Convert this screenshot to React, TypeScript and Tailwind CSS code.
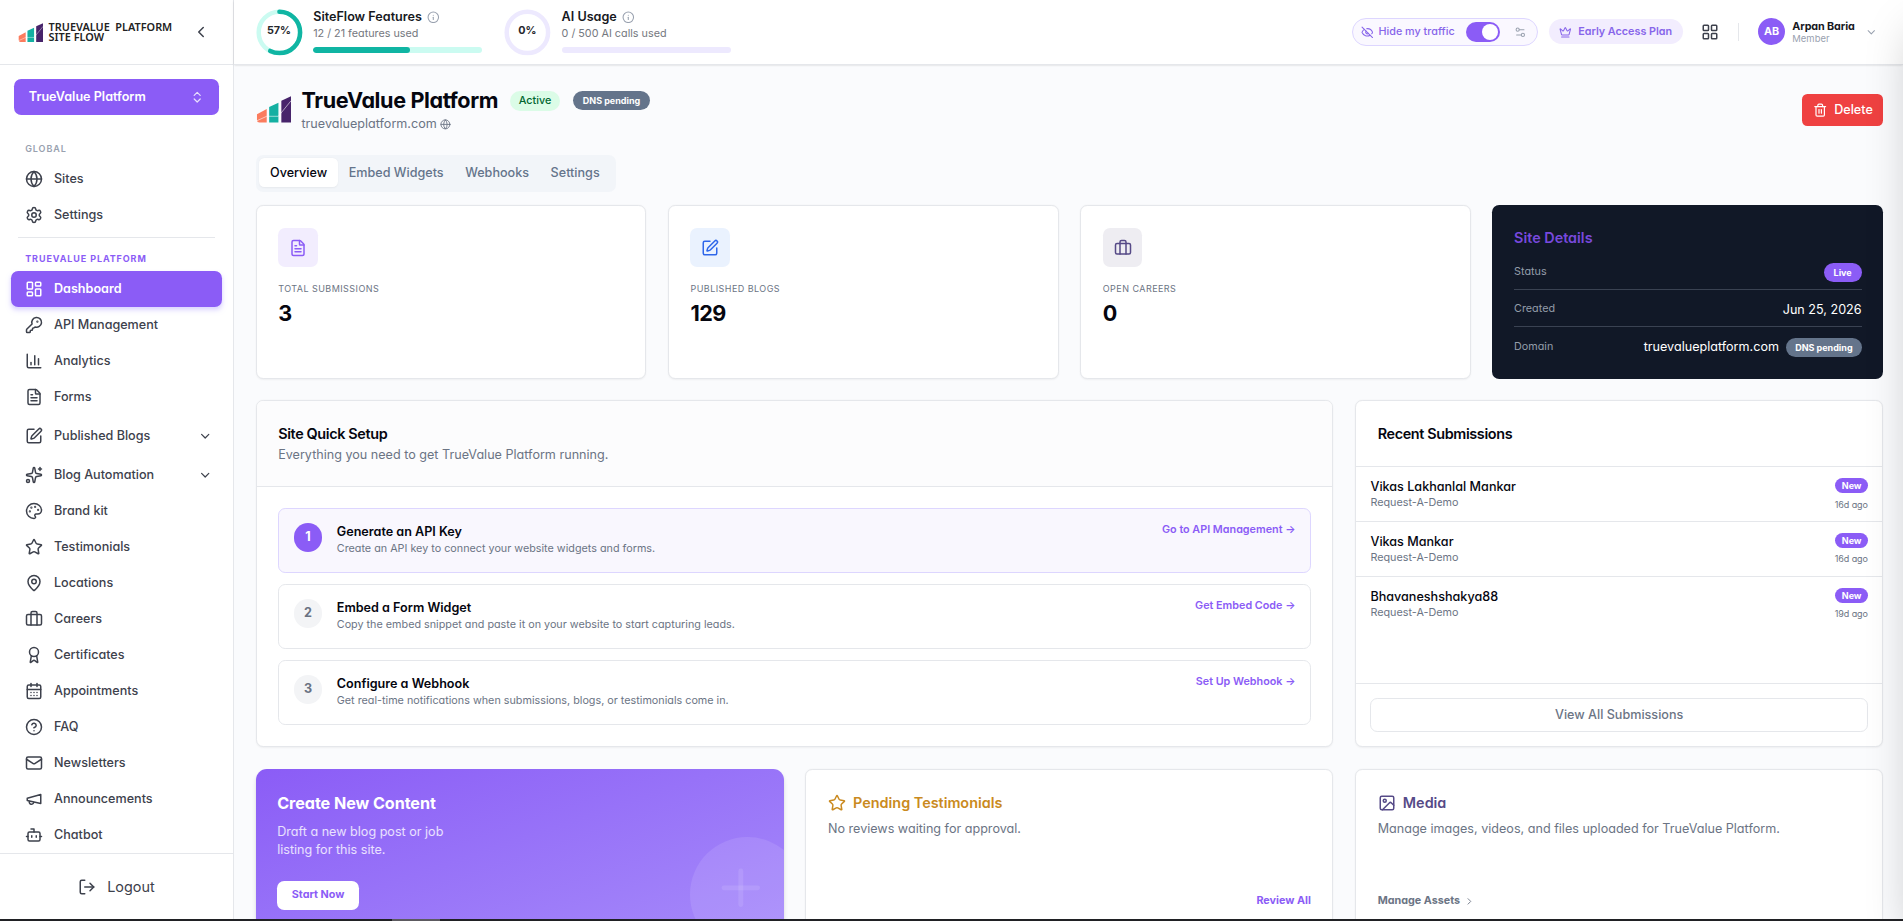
import type { ReactNode } from "react";
import {
  Award,
  Bot,
  Briefcase,
  CalendarDays,
  ChartColumn,
  ChevronDown,
  ChevronLeft,
  ChevronRight,
  ChevronsUpDown,
  CircleQuestionMark,
  Crown,
  EyeOff,
  FileText,
  Globe,
  Image,
  Info,
  KeyRound,
  LayoutDashboard,
  LayoutGrid,
  LogOut,
  MapPin,
  Palette,
  Plus,
  Settings,
  Settings2,
  Sparkles,
  SquarePen,
  Star,
  Trash2,
} from "lucide-react";
import clsx from "clsx";

function MegaphoneIcon({ className }: { className?: string }) {
  return (
    <svg
      viewBox="0 0 24 24"
      fill="none"
      stroke="currentColor"
      strokeWidth={2}
      strokeLinecap="round"
      strokeLinejoin="round"
      className={className}
    >
      <path d="m3 11 18-5v12L3 14v-3z" />
      <path d="M11.6 16.8a3 3 0 1 1-5.8-1.6" />
    </svg>
  );
}

function MailIcon({ className }: { className?: string }) {
  return (
    <svg
      viewBox="0 0 24 24"
      fill="none"
      stroke="currentColor"
      strokeWidth={2}
      strokeLinecap="round"
      strokeLinejoin="round"
      className={className}
    >
      <rect width="20" height="16" x="2" y="4" rx="2" />
      <path d="m22 7-8.970 5.700a1.940 1.940 0 0 1-2.060 0L2 7" />
    </svg>
  );
}

function LogoMark({ className }: { className?: string }) {
  return (
    <svg viewBox="0 0 36 28" className={className}>
      <path d="M1 18.5 11 13v14H3.5A2.5 2.5 0 0 1 1 24.500z" fill="#fb7c5e" />
      <path d="M13.500 11 23 6.500V27h-9.500z" fill="#14b0a2" />
      <path d="M26 4.500 36 0v27h-10z" fill="#47246b" />
      <path d="M0 25.500 11 20.500h12l13-16" fill="none" stroke="#fff" strokeOpacity=".65" strokeWidth=".9" />
    </svg>
  );
}

const siteLinks = [
  { label: "Dashboard", icon: LayoutDashboard, active: true },
  { label: "API Management", icon: KeyRound },
  { label: "Analytics", icon: ChartColumn },
  { label: "Forms", icon: FileText },
  { label: "Published Blogs", icon: SquarePen, group: true },
  { label: "Blog Automation", icon: Sparkles, group: true },
  { label: "Brand kit", icon: Palette },
  { label: "Testimonials", icon: Star },
  { label: "Locations", icon: MapPin },
  { label: "Careers", icon: Briefcase },
  { label: "Certificates", icon: Award },
  { label: "Appointments", icon: CalendarDays },
  { label: "FAQ", icon: CircleQuestionMark },
  { label: "Newsletters", icon: MailIcon },
  { label: "Announcements", icon: MegaphoneIcon },
  { label: "Chatbot", icon: Bot },
];

type NavItemProps = {
  label: string;
  icon: React.ComponentType<{ className?: string }>;
  active?: boolean;
  group?: boolean;
};

function NavItem({ label, icon: Icon, active, group }: NavItemProps) {
  return (
    <a
      className={clsx(
        "flex h-10 shrink-0 items-center gap-3 rounded-lg px-4 text-sm",
        active ? "bg-[#8b5cf6] font-semibold text-white shadow-md shadow-violet-200" : "font-medium text-[#3d414c]",
        group && "mt-[3.500px]",
      )}
    >
      <Icon className="size-5" />
      <span className="flex-1">{label}</span>
      {group && <ChevronDown className="-mr-[5px] size-4" />}
    </a>
  );
}

function Sidebar() {
  return (
    <aside className="flex w-[260px] shrink-0 flex-col border-r border-gray-200 bg-white">
      <div className="flex h-[72px] shrink-0 items-center border-b border-gray-200 pl-5">
        <LogoMark className="mt-0.5 h-[22px] w-7" />
        <div className="mt-px ml-1.5 w-[148px] font-['Noto_Sans'] text-[12.100px] leading-[12px] font-semibold whitespace-pre text-[#222] [font-feature-settings:normal]">
          <p>TRUEVALUE  PLATFORM</p>
          <p>SITE FLOW</p>
        </div>
        <ChevronLeft className="ml-[11px] size-5 text-[#3d414c]" />
      </div>

      <div className="flex min-h-0 flex-1 flex-col overflow-hidden">
        <button className="mx-4 mt-4 flex h-10 shrink-0 items-center justify-between rounded-lg bg-[#8b5cf6] px-4 text-sm font-semibold text-white">
          TrueValue Platform
          <ChevronsUpDown className="size-4 opacity-80" />
        </button>

        <nav className="flex flex-col px-3 pt-[23px]">
          <p className="flex h-7 items-center pl-4 text-[10px] font-semibold tracking-[0.1em] text-gray-400">
            GLOBAL
          </p>
          <NavItem label="Sites" icon={Globe} />
          <NavItem label="Settings" icon={Settings} />
          <div className="mx-2 mt-1 border-t border-gray-200" />
          <p className="flex h-[37px] items-center pt-[9px] pl-4 text-[10px] font-bold tracking-[0.1em] text-[#8b5cf6]">
            TRUEVALUE PLATFORM
          </p>
          {siteLinks.map((link) => (
            <NavItem key={link.label} {...link} />
          ))}
        </nav>
      </div>

      <div className="flex h-[75px] shrink-0 items-center justify-center gap-3 border-t border-gray-200 pb-0.5 text-base text-[#3d414c]">
        <LogOut className="size-5" />
        Logout
      </div>
    </aside>
  );
}

type UsageProps = {
  title: string;
  detail: string;
  percent: number;
  track: string;
  barTrack: string;
};

function Usage({ title, detail, percent, track, barTrack }: UsageProps) {
  const radius = 23;
  const length = 2 * Math.PI * radius;

  return (
    <div className="flex items-start gap-3">
      <div className="relative mt-[10px] size-[52px]">
        <svg viewBox="0 0 52 52" className="size-full -rotate-90">
          <circle cx="26" cy="26" r={radius} fill="none" strokeWidth="5" className={track} />
          {percent > 0 && (
            <circle
              cx="26"
              cy="26"
              r={radius}
              fill="none"
              stroke="#10b5a3"
              strokeWidth="5"
              strokeLinecap="round"
              strokeDasharray={`${(length * percent) / 100} ${length}`}
            />
          )}
        </svg>
        <span className="absolute inset-0 flex items-center justify-center pb-0.5 text-xs font-bold text-[#25272c]">
          {percent}%
        </span>
      </div>
      <div className="w-[188px] pt-[9px]">
        <div className="flex h-5 items-center gap-1.5 text-sm font-semibold text-[#17191e]">
          {title}
          <Info className="size-3.5 text-gray-400" />
        </div>
        <p className="mt-px text-xs leading-4 text-[#74777e]">{detail}</p>
        <div className={clsx("mt-1.5 h-[6.500px] overflow-hidden rounded-full", barTrack)}>
          <div className="h-full rounded-full bg-[#10b5a3]" style={{ width: `${percent}%` }} />
        </div>
      </div>
    </div>
  );
}

function Header() {
  return (
    <header className="relative flex h-[72px] shrink-0 justify-between border-b border-gray-200 bg-white pr-7 pl-6 shadow-sm">
      <div className="flex gap-6">
        <Usage
          title="SiteFlow Features"
          detail="12 / 21 features used"
          percent={57}
          track="stroke-teal-100"
          barTrack="bg-teal-100"
        />
        <Usage
          title="AI Usage"
          detail="0 / 500 AI calls used"
          percent={0}
          track="stroke-violet-100"
          barTrack="bg-violet-100"
        />
      </div>

      <div className="flex items-center">
        <div className="flex h-[31px] w-[206px] items-center rounded-full border border-violet-200 bg-[#faf8ff] pl-2 text-xs font-medium text-[#8765ea]">
          <EyeOff className="size-3.5" />
          <span className="ml-1.5">Hide my traffic</span>
          <span className="ml-auto flex h-[22px] w-[38px] items-center justify-end rounded-full bg-[#8b5cf6] p-0.5">
            <span className="size-[18px] rounded-full bg-white" />
          </span>
          <Settings2 className="mr-[11px] ml-4 size-3.5 text-gray-400" />
        </div>
        <div className="ml-[13px] flex h-7 w-[148px] items-center rounded-full bg-[#f2edfe] pl-[11px] text-xs font-semibold text-[#8765ea]">
          <Crown className="size-3.5" />
          <span className="ml-[7px]">Early Access Plan</span>
        </div>
        <LayoutGrid className="ml-5 size-5 text-[#3d414c]" />
        <div className="ml-[22px] h-5 w-px bg-gray-200" />
        <div className="ml-[21px] flex size-[30px] items-center justify-center rounded-full bg-[#8b5cf6] text-xs font-bold text-white">
          AB
        </div>
        <div className="mt-px ml-2 w-[73px] whitespace-nowrap">
          <p className="text-xs leading-4 font-bold tracking-[-0.01em] text-[#17191e]">Arpan Baria</p>
          <p className="text-[10.500px] leading-3 text-gray-400">Member</p>
        </div>
        <ChevronDown className="ml-2 size-3.5 text-gray-400" />
      </div>
    </header>
  );
}

function Badge({ children, className }: { children: ReactNode; className?: string }) {
  return (
    <span
      className={clsx("flex shrink-0 items-center rounded-full text-[10px] font-bold text-white", className)}
    >
      {children}
    </span>
  );
}

const cardClass = "rounded-lg border border-gray-200 bg-white shadow-xs";

const stats = [
  { label: "TOTAL SUBMISSIONS", value: "3", icon: FileText, tint: "bg-[#f2edfe] text-[#8b5cf6]" },
  { label: "PUBLISHED BLOGS", value: "129", icon: SquarePen, tint: "bg-[#eaf2fe] text-[#2f67ea]" },
  { label: "OPEN CAREERS", value: "0", icon: Briefcase, tint: "bg-[#eeedf2] text-[#564a87]" },
];

const steps = [
  {
    title: "Generate an API Key",
    text: "Create an API key to connect your website widgets and forms.",
    action: "Go to API Management",
  },
  {
    title: "Embed a Form Widget",
    text: "Copy the embed snippet and paste it on your website to start capturing leads.",
    action: "Get Embed Code",
  },
  {
    title: "Configure a Webhook",
    text: "Get real-time notifications when submissions, blogs, or testimonials come in.",
    action: "Set Up Webhook",
  },
];

const submissions = [
  { name: "Vikas Lakhanlal Mankar", age: "16d ago" },
  { name: "Vikas Mankar", age: "16d ago" },
  { name: "Bhavaneshshakya88", age: "19d ago" },
];

function SiteHeading() {
  return (
    <div className="flex h-[76px] items-center justify-between">
      <div className="flex items-center gap-3">
        <LogoMark className="h-[31px] w-[39px]" />
        <div className="mt-0.5">
          <div className="flex items-center">
            <h1 className="text-2xl leading-7 font-bold tracking-[-0.017em] text-[#05060f]">TrueValue Platform</h1>
            <span className="ml-[13px] flex h-[22px] items-center rounded-full bg-green-100 px-2.5 text-xs font-medium text-green-800">
              Active
            </span>
            <Badge className="ml-3.5 h-[21px] bg-[#64748b] px-[11px]">DNS pending</Badge>
          </div>
          <p className="mt-0.5 flex items-center gap-1 text-sm leading-5 text-[#6b7484]">
            truevalueplatform.com
            <Globe className="size-3" />
          </p>
        </div>
      </div>
      <button className="flex h-9 w-[90px] items-center justify-center gap-2 rounded-md bg-[#ef4141] text-sm font-medium text-white">
        <Trash2 className="size-4" />
        Delete
      </button>
    </div>
  );
}

function QuickSetup() {
  return (
    <section className={clsx(cardClass, "col-span-2 overflow-hidden")}>
      <div className="h-[95px] border-b border-gray-200 bg-[#fcfcfd] px-6 pt-6">
        <h2 className="text-base leading-6 font-semibold tracking-tight text-[#05060f]">Site Quick Setup</h2>
        <p className="-mt-px text-sm leading-6 text-[#6b7484]">
          Everything you need to get TrueValue Platform running.
        </p>
      </div>
      <div className="flex flex-col gap-3 px-6 pt-[23px]">
        {steps.map((step, i) => (
          <div
            key={step.title}
            className={clsx(
              "flex h-[72.400px] items-start rounded-lg border p-4",
              i === 0 ? "border-violet-200 bg-[#f9f7fe]" : "border-gray-200",
            )}
          >
            <span
              className={clsx(
                "flex size-8 items-center justify-center rounded-full text-sm",
                i === 0 ? "bg-[#8b5cf6] font-bold text-white" : "bg-gray-100 font-bold text-gray-500",
              )}
            >
              {i + 1}
            </span>
            <div className="ml-4 flex-1">
              <h3 className="text-sm leading-5 font-semibold text-[#05060f]">{step.title}</h3>
              <p className="mt-px text-xs leading-4 text-[#6b7484]">{step.text}</p>
            </div>
            <a className="text-xs leading-4 font-semibold text-[#8b5cf6]">{step.action} →</a>
          </div>
        ))}
      </div>
    </section>
  );
}

function RecentSubmissions() {
  return (
    <section className={clsx(cardClass, "flex flex-col")}>
      <h2 className="h-[73px] border-b border-gray-200 px-6 pt-6 text-base leading-6 font-semibold tracking-tight text-[#05060f]">
        Recent Submissions
      </h2>
      {submissions.map((item, i) => (
        <div
          key={item.name}
          className={clsx("flex h-[61px] justify-between px-4 pt-3", i < 2 && "border-b border-gray-200")}
        >
          <div>
            <p className="text-sm leading-5 font-medium text-[#05060f]">{item.name}</p>
            <p className="text-xs leading-[15px] text-[#6b7484]">Request-A-Demo</p>
          </div>
          <div className="flex flex-col items-end">
            <Badge className="h-[17px] bg-[#8b5cf6] px-[7px]">New</Badge>
            <span className="mt-[7px] text-[10px] leading-3 tracking-[-0.01em] text-[#6b7484]">{item.age}</span>
          </div>
        </div>
      ))}
      <div className="mt-auto border-t border-gray-200 px-4 pt-4 pb-[15px]">
        <button className="h-[38px] w-full rounded-lg border border-gray-200 text-sm font-medium text-[#6b7484]">
          View All Submissions
        </button>
      </div>
    </section>
  );
}

function Overview() {
  return (
    <main className="flex-1 overflow-hidden bg-[#fafbfd] pt-3 pr-[22px] pl-6">
      <SiteHeading />

      <div className="mt-3 flex h-[41px] w-fit items-start rounded-lg bg-[#f2f5f9] py-1 pr-1.5 pl-1 text-sm font-medium text-[#64748b]">
        <span className="flex h-8 items-center rounded-md bg-white px-3 text-[#05060f] shadow-xs">Overview</span>
        <span className="flex h-8 items-center px-3">Embed Widgets</span>
        <span className="flex h-8 items-center px-3">Webhooks</span>
        <span className="flex h-8 items-center px-3">Settings</span>
      </div>

      <div className="mt-[15px] grid h-[193px] grid-cols-4 gap-6">
        {stats.map(({ label, value, icon: Icon, tint }) => (
          <div key={label} className={clsx(cardClass, "p-6")}>
            <div className={clsx("flex size-11 items-center justify-center rounded-lg", tint)}>
              <Icon className="size-5" />
            </div>
            <p className="mt-4 text-[10px] leading-4 tracking-wider text-[#6b7484]">{label}</p>
            <p className="mt-[3px] text-2xl leading-8 font-bold tracking-tight text-[#05060f]">{value}</p>
          </div>
        ))}

        <div className="rounded-lg bg-[#111827] px-6 pt-6 text-white">
          <h2 className="text-base leading-6 font-semibold text-[#7849dd]">Site Details</h2>
          <div className="mt-[9px] flex h-[37px] items-center justify-between border-b border-[#3a4252]">
            <span className="text-xs text-[#949daa]">Status</span>
            <Badge className="h-[21px] bg-[#8b5cf6] px-[11px]">Live</Badge>
          </div>
          <div className="flex h-[41px] items-center justify-between border-b border-[#3a4252] pt-1">
            <span className="text-xs text-[#949daa]">Created</span>
            <span className="text-sm">Jun 25, 2026</span>
          </div>
          <div className="flex h-11 items-center pt-0.5">
            <span className="text-xs text-[#949daa]">Domain</span>
            <span className="mr-2 ml-auto text-sm">truevalueplatform.com</span>
            <Badge className="h-[21px] bg-[#64748b] px-2.5">DNS pending</Badge>
          </div>
        </div>
      </div>

      <div className="mt-6 grid h-[385px] grid-cols-3 gap-6">
        <QuickSetup />
        <RecentSubmissions />
      </div>

      <div className="mt-6 grid h-[200px] grid-cols-3 gap-6">
        <section className="relative overflow-hidden rounded-xl bg-linear-to-br from-[#8b5cf6] to-[#a78bfa] px-6 pt-[25px] text-white shadow-md">
          <h2 className="text-lg leading-7 font-bold tracking-[-0.005em]">Create New Content</h2>
          <p className="mt-2 w-[200px] text-sm leading-5 text-white/80">
            Draft a new blog post or job listing for this site.
          </p>
          <button className="mt-6 h-8 w-[91px] rounded-lg bg-white text-xs font-bold text-[#8b5cf6]">
            Start Now
          </button>
          <div className="absolute top-[76px] -right-6 size-32 rounded-full bg-white/10" />
          <Plus className="absolute top-[100px] right-4 size-16 text-white/10" />
        </section>

        <section className={clsx(cardClass, "flex flex-col px-6 pt-[23px]")}>
          <h2 className="flex items-center gap-2 text-base leading-7 font-semibold text-[#ca8a20]">
            <Star className="size-5" />
            Pending Testimonials
          </h2>
          <p className="mt-[5px] text-sm text-[#6b7484]">No reviews waiting for approval.</p>
          <a className="mt-[62px] self-end text-xs font-bold text-[#8b5cf6]">Review All</a>
        </section>

        <section className={clsx(cardClass, "flex flex-col px-6 pt-[23px]")}>
          <h2 className="flex items-center gap-2 text-base leading-7 font-semibold text-[#564a87]">
            <Image className="size-5" />
            Media
          </h2>
          <p className="mt-[5px] text-sm text-[#6b7484]">
            Manage images, videos, and files uploaded for TrueValue Platform.
          </p>
          <a className="mt-[62px] flex items-center gap-1 text-xs font-bold text-[#6b7484]">
            Manage Assets
            <ChevronRight className="size-3" />
          </a>
        </section>
      </div>
    </main>
  );
}

export default function App() {
  return (
    <div className="relative h-[921px] overflow-hidden">
      <div className="relative flex h-[1023.330px] bg-white font-[Inter,sans-serif] [font-feature-settings:'cv11'] [zoom:0.9]">
        <Sidebar />
        <div className="flex min-w-0 flex-1 flex-col">
          <Header />
          <Overview />
        </div>
        {/* closed drawer, parked off the right edge */}
        <div className="absolute inset-y-0 left-full w-96 bg-white shadow-2xl" />
      </div>
      <div className="absolute inset-x-0 bottom-0 h-0.5 bg-[#202124] pl-[392px]">
        <div className="h-full w-12 bg-[#5c5a60]" />
      </div>
    </div>
  );
}
